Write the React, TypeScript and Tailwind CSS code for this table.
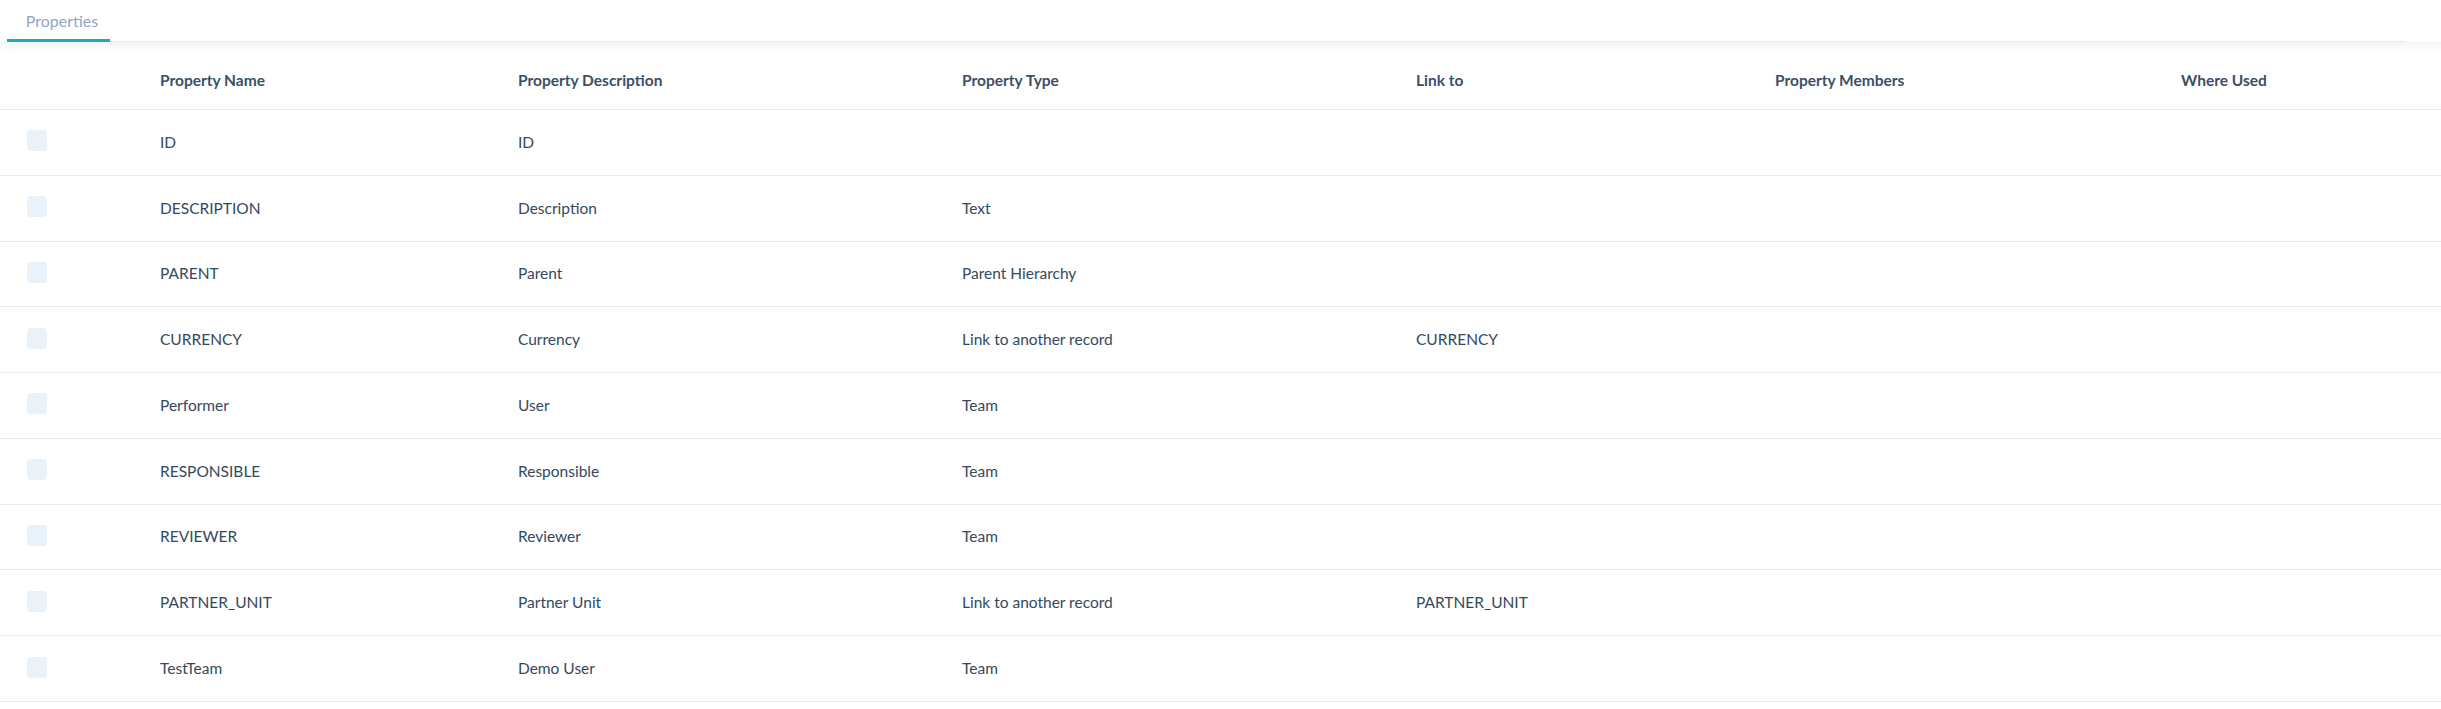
interface PropertyRow {
  name: string;
  description: string;
  type: string;
  linkTo: string;
}

const ROWS: PropertyRow[] = [
  { name: 'ID', description: 'ID', type: '', linkTo: '' },
  { name: 'DESCRIPTION', description: 'Description', type: 'Text', linkTo: '' },
  { name: 'PARENT', description: 'Parent', type: 'Parent Hierarchy', linkTo: '' },
  { name: 'CURRENCY', description: 'Currency', type: 'Link to another record', linkTo: 'CURRENCY' },
  { name: 'Performer', description: 'User', type: 'Team', linkTo: '' },
  { name: 'RESPONSIBLE', description: 'Responsible', type: 'Team', linkTo: '' },
  { name: 'REVIEWER', description: 'Reviewer', type: 'Team', linkTo: '' },
  { name: 'PARTNER_UNIT', description: 'Partner Unit', type: 'Link to another record', linkTo: 'PARTNER_UNIT' },
  { name: 'TestTeam', description: 'Demo User', type: 'Team', linkTo: '' },
];

const HEADERS = [
  'Property Name',
  'Property Description',
  'Property Type',
  'Link to',
  'Property Members',
  'Where Used',
];

// checkbox column + six data columns
const GRID = 'grid grid-cols-[160px_358px_444px_454px_359px_406px_1fr]';

export default function App() {
  return (
    <main className="min-h-screen bg-white font-['Lato','Noto_Sans',sans-serif] text-[#34495e]">
      {/* Tabs */}
      <div className="ml-[7px] mr-[36px] flex h-[42px] items-end border-b border-[#e3ebf2]">
        <button
          type="button"
          className="-mb-px flex h-[40px] w-[103px] items-center justify-center border-b-[3px] border-[#15adc0] pl-[7px] text-[16px] text-[#8ea6c0]"
        >
          Properties
        </button>
      </div>
      <div className="h-[10px] bg-gradient-to-b from-[#f3f5f7] to-white" />

      {/* Table */}
      <div className={`${GRID} h-[58px] items-center border-b border-[#e6eef5]`}>
        <div />
        {HEADERS.map((h) => (
          <div key={h} className="text-[15.5px] font-bold text-[#3b4f66]">
            {h}
          </div>
        ))}
      </div>

      {ROWS.map((row) => (
        <div
          key={row.name}
          className={`${GRID} h-[65.78px] items-center border-b border-[#e6eef5] text-[15.5px]`}
        >
          <div className="pl-[27px]">
            <span className="-mt-[3px] block h-[21px] w-[20px] rounded-[4px] bg-[#e9f2f9]" />
          </div>
          <div>{row.name}</div>
          <div>{row.description}</div>
          <div>{row.type}</div>
          <div>{row.linkTo}</div>
          <div />
          <div />
        </div>
      ))}
    </main>
  );
}
